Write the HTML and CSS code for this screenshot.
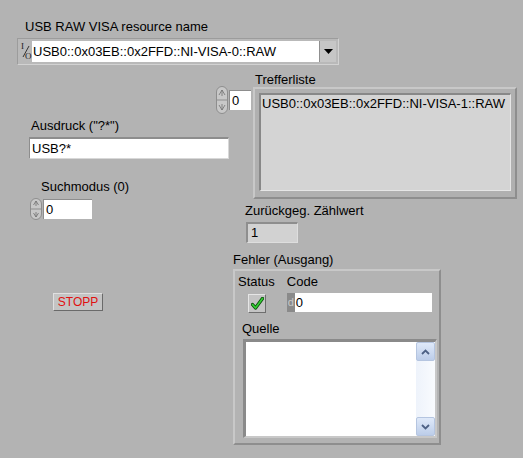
FILE: index.html
```html
<!DOCTYPE html>
<html>
<head>
<meta charset="utf-8">
<link rel="stylesheet" href="styles.css">
</head>
<body>
<div class="panel">
  <!-- VISA resource name -->
  <div class="ctl visa">
    <div class="label">USB RAW VISA resource name</div>
    <div class="visa-box">
      <span class="io">
        <span class="io-i">I</span>
        <svg class="io-s" width="12" height="21" viewBox="0 0 12 21"><path d="M9 5L3 16" stroke="#333" stroke-width="1"/></svg>
        <span class="io-o">O</span>
      </span>
      <span class="visa-field">USB0::0x03EB::0x2FFD::NI-VISA-0::RAW</span>
      <span class="dd-btn"><svg width="9" height="5" viewBox="0 0 9 5"><path d="M0 0h9L4.5 5z" fill="#000"/></svg></span>
    </div>
  </div>

  <!-- Index spinner for Trefferliste -->
  <div class="ctl idx">
    <svg class="spin" width="12" height="28" viewBox="0 0 12 28"><rect x="0.5" y="0.5" width="11" height="27" rx="5.5" fill="#c8c8c8" stroke="#8e8e8e"/><line x1="1" y1="14" x2="11" y2="14" stroke="#8e8e8e"/><path d="M6 4l-3 5M6 4l3 5M6 4v6" stroke="#707070" fill="none" stroke-width="0.8"/><path d="M6 24l-3-5M6 24l3-5M6 24v-6" stroke="#707070" fill="none" stroke-width="0.8"/></svg>
    <span class="num-field small">0</span>
  </div>

  <!-- Trefferliste -->
  <div class="ctl list">
    <div class="label">Trefferliste</div>
    <div class="frame list-frame">
      <div class="list-inner">USB0::0x03EB::0x2FFD::NI-VISA-1::RAW</div>
    </div>
  </div>

  <!-- Ausdruck -->
  <div class="ctl expr">
    <div class="label">Ausdruck ("?*")</div>
    <div class="str-field expr-field">USB?*</div>
  </div>

  <!-- Suchmodus -->
  <div class="ctl mode">
    <div class="label mode-label">Suchmodus (0)</div>
    <div class="mode-row">
      <svg class="spin" width="12" height="22" viewBox="0 0 12 22"><rect x="0.5" y="0.5" width="11" height="21" rx="5.5" fill="#c8c8c8" stroke="#8e8e8e"/><line x1="1" y1="11" x2="11" y2="11" stroke="#8e8e8e"/><path d="M6 3l-2.5 4M6 3l2.5 4M6 3v5" stroke="#707070" fill="none" stroke-width="0.8"/><path d="M6 19l-2.5-4M6 19l2.5-4M6 19v-5" stroke="#707070" fill="none" stroke-width="0.8"/></svg>
      <span class="num-field mode-field">0</span>
    </div>
  </div>

  <!-- Zurückgeg. Zählwert -->
  <div class="ctl count">
    <div class="label">Zurückgeg. Zählwert</div>
    <div class="ind-field">1</div>
  </div>

  <!-- STOPP -->
  <div class="ctl stop">STOPP</div>

  <!-- Fehler (Ausgang) -->
  <div class="ctl err">
    <div class="label">Fehler (Ausgang)</div>
    <div class="frame err-frame">
      <div class="err-top">
        <div class="status">
          <div class="label">Status</div>
          <div class="check"><svg width="13" height="13" viewBox="0 0 13 13"><path d="M1.5 7.5l3 3.5L11.5 1.5" fill="none" stroke="#0b4f0b" stroke-width="3.4" stroke-linecap="round" stroke-linejoin="round"/><path d="M1.5 7.5l3 3.5L11.5 1.5" fill="none" stroke="#34d234" stroke-width="1.6" stroke-linecap="round" stroke-linejoin="round"/></svg></div>
        </div>
        <div class="code">
          <div class="label">Code</div>
          <div class="code-row"><span class="radix">d</span><span class="code-field">0</span></div>
        </div>
      </div>
      <div class="label quelle-label">Quelle</div>
      <div class="src-box">
        <div class="src-text"></div>
        <div class="sbar">
          <span class="sbtn"><svg width="9" height="6" viewBox="0 0 9 6"><path d="M1 5L4.5 1.5 8 5" fill="none" stroke="#4d6185" stroke-width="1.8"/></svg></span>
          <span class="strack"></span>
          <span class="sbtn"><svg width="9" height="6" viewBox="0 0 9 6"><path d="M1 1l3.5 3.5L8 1" fill="none" stroke="#4d6185" stroke-width="1.8"/></svg></span>
        </div>
      </div>
    </div>
  </div>
</div>
</body>
</html>
```

FILE: styles.css
```css
html, body {
  margin: 0;
  padding: 0;
  background: #b3b3b3;
}
.panel {
  position: relative;
  width: 523px;
  height: 458px;
  overflow: hidden;
  background: #b3b3b3;
  font-family: "Liberation Sans", Arial, sans-serif;
  font-size: 13px;
  color: #000;
}
.ctl {
  position: absolute;
}
.label {
  line-height: 15px;
  height: 15px;
  white-space: nowrap;
}

/* VISA resource */
.visa { left: 17px; top: 19px; }
.visa .label { padding-left: 8px; margin-bottom: 4px; }
.visa-box {
  display: flex;
  align-items: stretch;
  width: 316px;
  height: 21px;
  padding: 2px;
  background: #b9b9b9;
  border-top: 1px solid #9c9c9c;
  border-left: 1px solid #9c9c9c;
  border-bottom: 1px solid #d2d2d2;
  border-right: 1px solid #d2d2d2;
}
.io {
  position: relative;
  width: 12px;
  font-family: "Liberation Serif", serif;
  font-size: 9px;
  line-height: 9px;
  color: #222;
}
.io-i { position: absolute; left: 1px; top: 1px; }
.io-s { position: absolute; left: 0; top: 0; }
.io-o { position: absolute; left: 5px; top: 11px; }
.visa-field {
  flex: 1;
  background: #fff;
  line-height: 21px;
  padding-left: 1px;
  white-space: nowrap;
}
.dd-btn {
  width: 16px;
  display: flex;
  align-items: center;
  justify-content: center;
  background: #c6c6c6;
  border-left: 1px solid #8f8f8f;
}

/* spinners */
.spin { display: block; }
.idx { left: 216px; top: 86px; display: flex; align-items: center; gap: 1px; }
.num-field {
  background: #fff;
  display: block;
  line-height: 19px;
  height: 19px;
  padding-left: 2px;
  border-top: 1px solid #8d8d8d;
  border-left: 1px solid #8d8d8d;
}
.num-field.small { width: 19px; }

/* Trefferliste */
.list { left: 253px; top: 72px; }
.list .label { padding-left: 2px; margin-bottom: 0; }
.frame {
  border-top: 2px solid #c8c8c8;
  border-left: 2px solid #c8c8c8;
  border-right: 2px solid #8e8e8e;
  border-bottom: 2px solid #8e8e8e;
  background: #b0b0b0;
}
.list-frame {
  width: 252px;
  height: 100px;
  padding: 4px;
}
.list-inner {
  height: 94px;
  background: #d4d4d4;
  border-top: 2px solid #888;
  border-left: 2px solid #888;
  border-right: 1px solid #e6e6e6;
  border-bottom: 1px solid #e6e6e6;
  padding: 1px 0 0 1px;
  white-space: nowrap;
  line-height: 15px;
}

/* Ausdruck */
.expr { left: 29px; top: 118px; }
.expr .label { padding-left: 2px; margin-bottom: 4px; }
.str-field {
  background: #fff;
  width: 196px;
  height: 19px;
  line-height: 19px;
  padding-left: 2px;
  border-top: 2px solid #8d8d8d;
  border-left: 1px solid #8d8d8d;
  border-right: 1px solid #d8d8d8;
  border-bottom: 1px solid #d8d8d8;
}

/* Suchmodus */
.mode { left: 30px; top: 179px; }
.mode-label { padding-left: 11px; margin-bottom: 4px; }
.mode-row { display: flex; align-items: center; gap: 1px; }
.mode-field { width: 46px; }

/* Zurückgeg. Zählwert */
.count { left: 245px; top: 203px; }
.count .label { margin-bottom: 4px; }
.ind-field {
  width: 46px;
  height: 18px;
  margin-left: 1px;
  line-height: 18px;
  padding-left: 3px;
  background: #d2d2d2;
  border-top: 2px solid #8e8e8e;
  border-left: 2px solid #8e8e8e;
  border-right: 1px solid #dedede;
  border-bottom: 1px solid #dedede;
}

/* STOPP */
.stop {
  left: 53px;
  top: 293px;
  width: 48px;
  height: 16px;
  line-height: 16px;
  text-align: center;
  font-size: 12px;
  color: #e01010;
  background: #c4c4c4;
  border-top: 1px solid #e0e0e0;
  border-left: 1px solid #e0e0e0;
  border-right: 1px solid #6a6a6a;
  border-bottom: 1px solid #6a6a6a;
}

/* Fehler */
.err { left: 233px; top: 252px; }
.err > .label { margin-bottom: 2px; }
.err-frame {
  width: 198px;
  height: 166px;
  padding: 3px;
  background: #b3b3b3;
}
.err-top { display: flex; gap: 12px; }
.status .label { margin-bottom: 5px; }
.check {
  margin-left: 10px;
  width: 16px;
  height: 17px;
  display: flex;
  align-items: center;
  justify-content: center;
  background: #c4c4c4;
  border-top: 1px solid #e6e6e6;
  border-left: 1px solid #e6e6e6;
  border-right: 1px solid #6e6e6e;
  border-bottom: 1px solid #6e6e6e;
}
.code .label { margin-bottom: 4px; }
.code-row { display: flex; }
.radix {
  width: 8px;
  height: 19px;
  line-height: 19px;
  font-size: 11px;
  color: #c8c8c8;
  background: #8a8a8a;
  text-align: center;
}
.code-field {
  width: 136px;
  height: 19px;
  line-height: 19px;
  background: #fff;
  padding-left: 1px;
}
.quelle-label { padding-left: 4px; margin-top: 8px; margin-bottom: 3px; }
.src-box {
  margin-left: 5px;
  width: 189px;
  height: 94px;
  display: flex;
  border-top: 3px solid #8a8a8a;
  border-left: 3px solid #8a8a8a;
  border-right: 2px solid #c8c8c8;
  border-bottom: 2px solid #c8c8c8;
}
.src-text { flex: 1; background: #fff; }
.sbar {
  width: 19px;
  display: flex;
  flex-direction: column;
  background: linear-gradient(to right, #eef3fb, #f9fbfe);
}
.sbtn {
  height: 17px;
  display: flex;
  align-items: center;
  justify-content: center;
  background: linear-gradient(to bottom, #dfe9f9, #bccde9);
  border: 1px solid #b5c5e0;
  border-radius: 2px;
}
.strack { flex: 1; }
```
